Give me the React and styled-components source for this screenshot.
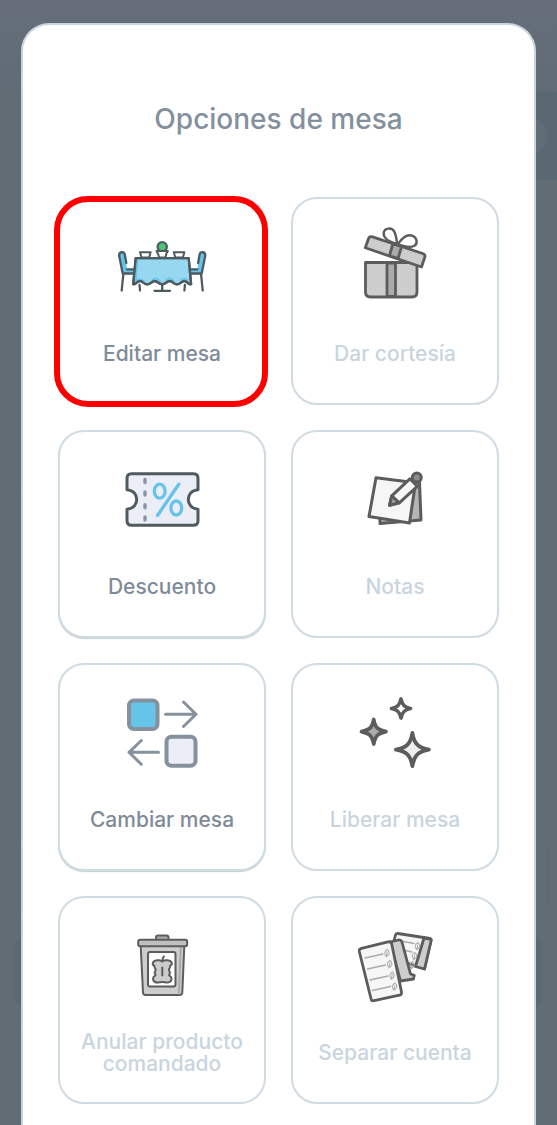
import styled, { createGlobalStyle } from 'styled-components'

const GlobalStyle = createGlobalStyle`
  * {
    box-sizing:border-box;
  }
  body{
    margin:0;
    background:#626c75;
    font-family:Inter, 'Liberation Sans', sans-serif;
  }
`

const Screen = styled.div`
  position:relative;
  min-height:100vh;
  padding:23px 21px 0;
  display:flex;
  overflow:hidden;
`

/* dimmed page under the modal */
const Backdrop = styled.div`
  position:absolute;
  inset:0;
  display:flex;
  flex-direction:column;
  background:#626c75;
`
const BackdropHeader = styled.div`
  height:92px;
  background:linear-gradient(#666f79, #616b75);
`
const BackdropBar = styled.div`
  height:88px;
  padding:0 9px;
  display:flex;
  align-items:center;
  justify-content:flex-end;
  background:linear-gradient(90deg, #626c75 50%, #5a6873 50%);

  span{
    width:36px;
    height:36px;
    border-radius:50%;
    background:#626c75;
  }
`
const BackdropSection = styled.div`
  height:${({ height }) => height};
  border-bottom:1px solid #5f6973;
`
const BackdropCard = styled.div`
  height:${({ height }) => height};
  margin:0 ${({ inset }) => inset};
  border:1px solid #5f6973;
  border-radius:12px;
  background:${({ bg }) => bg || 'transparent'};
`
const BackdropList = styled.div`
  display:flex;
  flex-direction:column;
  gap:20px;
  height:539px;
  padding-top:350px;
  border-bottom:1px solid #5f6973;
`

const Modal = styled.section`
  position:relative;
  flex:1;
  padding:78px 35px 20px;
  background:#fff;
  border:2px solid #c9d5de;
  border-bottom:0;
  border-radius:28px 28px 0 0;
`
const Title = styled.h1`
  margin:0 0 62px;
  font-size:28px;
  line-height:32px;
  font-weight:500;
  text-align:center;
  color:#84909d;
`
const Grid = styled.div`
  display:grid;
  grid-template-columns:1fr 1fr;
  gap:25px;
`
const Option = styled.button`
  position:relative;
  display:flex;
  flex-direction:column;
  align-items:center;
  gap:17px;
  min-width:0;
  aspect-ratio:1;
  padding:20px 8px;
  border:2px solid #d1dbe2;
  border-radius:26px;
  background:#fff;
  box-shadow:${({ $selected }) => $selected ? 'none' : '0 1px 1px #c3ced6'};
  color:#7f8b99;
  font:inherit;
  cursor:pointer;

  &:disabled{
    color:#c9d5de;
    box-shadow:none;
    cursor:default;
  }
  svg{
    flex:none;
    width:96px;
    height:96px;
  }
`
const Label = styled.span`
  display:flex;
  align-items:center;
  justify-content:center;
  height:44px;
  font-size:21px;
  line-height:22px;
  font-weight:500;
`
const Highlight = styled.span`
  position:absolute;
  inset:-3px -4px -4px -6px;
  border:6px solid #ff0000;
  border-radius:34px;
  pointer-events:none;
`

const Icon = ({ stroke = '#5c5c5c', width = 2.8, children }) => (
  <svg
    viewBox="0 0 96 96"
    fill="none"
    stroke={stroke}
    strokeWidth={width}
    strokeLinecap="round"
    strokeLinejoin="round"
    aria-hidden="true"
  >
    {children}
  </svg>
)

const Chair = () => (
  <g>
    <path d="M5.2 37c-.3-4.500 5-5 5.600-1.500L13 50.300h8.500v5H9.300z" fill="#66c4e8" stroke="none" />
    <path d="M12.300 44l-1.500-8.500c-.9-3.500-6-3-5.600 1.500l3.500 17.500h12M13 50.300h7M9.300 55.500L7.700 71.500M25.500 66l.5 5.500" />
  </g>
)

const TableIcon = () => (
  <Icon stroke="#4d5b60" width={2.3}>
    <Chair />
    <g transform="translate(96.400 0) scale(-1 1)"><Chair /></g>
    <path d="M48.200 64v7.500M40.500 71.800h15.500" />
    <path d="M21.700 39.200h53l2.400 26c-3 .8-4-3.200-6.600-3.200-3 0-4 3.400-7.400 3.400S58.500 62 55.700 62s-4 3.200-7.500 3.200-4.700-3.200-7.500-3.200-4 3.400-7.400 3.400S28.800 62 26 62s-4 3.800-6.800 3.200z" fill="#98d7f0" />
    <path d="M23.500 41l-1.700 20.500c2-1.500 6-2 8 .5M38 61c3-2.500 6-2 8 1M52 61c3-2.500 6-2 8 1M67 61c2-1.500 5-1.500 6.500 0" stroke="#66c4e8" strokeWidth="1.600" />
    <path d="M21.700 39.200h53l2.400 26c-3 .8-4-3.200-6.600-3.200-3 0-4 3.400-7.400 3.400S58.500 62 55.700 62s-4 3.200-7.500 3.200-4.700-3.200-7.500-3.200-4 3.400-7.400 3.400S28.800 62 26 62s-4 3.800-6.800 3.200z" />
    <circle cx="48.200" cy="27.700" r="4.600" fill="#4cc47b" />
    <path d="M42.500 32h11.400l-1.700 3-.8 3.500h-6.400l-.8-3.500zM26 33.300h10.600l-1.500 5.200h-7.600zM59.800 33.300h10.600l-1.500 5.200h-7.600z" fill="#fff" strokeWidth="2" />
  </Icon>
)

const GiftIcon = () => (
  <Icon>
    <path d="M50 25c-7-2-14-6-13.300-11.200.8-5 8-5.800 10.600-1.200 2 3.800 2.400 8 2.700 12.400zM51 25c3.500-5 8.500-9.800 13.500-8.500 6 1.600 6.500 8.500 2.500 10.500-4 1.800-10 .5-16-2z" fill="#fff" strokeWidth="2.400" />
    <path d="M18.500 43.500H70V73q0 5-5 5H23.500q-5 0-5-5z" fill="#cdcdcd" />
    <path d="M40 44h8.500v33.500H40z" fill="#aaa" />
    <path d="M25.500 17.800q-3-1-4 2l-3.200 9L74.500 48l3.200-9.500q1-3-2-4z" fill="#cdcdcd" />
    <path d="M45.800 24.800l8.700 3L51 39.600l-8.500-2.900z" fill="#aaa" />
  </Icon>
)

const TicketIcon = () => (
  <Icon stroke="#4f5b5e" width={3}>
    <path d="M17.500 21.800h62q4.500 0 4.500 4.500v11.500c-13 1-13 18.400 0 19.400v11.500q0 4.500-4.500 4.500h-62q-4.500 0-4.500-4.500V57.200c13-1 13-18.400 0-19.400V26.300q0-4.500 4.500-4.500z" fill="#ebeef6" />
    <path d="M31 27.500v3M31 40v3M31 52.700v3M31 65v3" stroke="#8a95a3" strokeWidth="3.400" />
    <g stroke="#66c4e8" strokeWidth="3.300">
      <ellipse cx="45.700" cy="39.200" rx="5.400" ry="7" />
      <ellipse cx="62.300" cy="56" rx="5.400" ry="7" />
      <path d="M64.800 32.200L43.500 63.500" />
    </g>
  </Icon>
)

const NotesIcon = () => (
  <Icon width={3}>
    <path d="M33 67v4.500l41-3.500-1.500-38-30-1z" fill="#b5b5b5" />
    <path d="M29 25.800l39.500 5L62.500 71 22 64.500z" fill="#f6f6f6" />
    <path d="M42.500 53.300l2.300-9.500 18-17 7.500 7.500-18 16.500z" fill="#f6f6f6" />
    <path d="M42.500 53.300l2.300-9.500 7.500 7z" fill="#a5a5a5" />
    <circle cx="69.800" cy="25.600" r="4.500" fill="#8c8c8c" />
  </Icon>
)

const SwapIcon = () => (
  <Icon stroke="#86919e" width={3}>
    <rect x="15" y="15.500" width="28.500" height="28.500" rx="5" fill="#66c4e8" strokeWidth="4" />
    <rect x="52.500" y="51.700" width="29" height="29" rx="5" fill="#ebeef6" strokeWidth="4" />
    <path d="M51.500 29.300H82M69.500 17L82 29.300 69.500 41.500M44.500 67.300H15M27.300 55.500L15 67.300l12.300 12" />
  </Icon>
)

const SparklesIcon = () => (
  <Icon width={3.800}>
    <path d="M54 14c1 6 3.500 8.500 9.500 9.500-6 1-8.500 3.500-9.500 9.500-1-6-3.500-8.500-9.500-9.500 6-1 8.500-3.500 9.500-9.500z" fill="#fff" />
    <path d="M26.700 34.500c1.500 8 4 10.500 12.200 12.200-8.200 1.700-10.700 4.300-12.200 12.300-1.500-8-4-10.600-12.200-12.300 8.200-1.700 10.700-4.200 12.200-12.200z" fill="#aaa" />
    <path d="M65.400 48c1.600 10.500 6 15 16.500 16.600-10.500 1.600-14.900 6-16.500 16.600C63.800 70.600 59.400 66.200 48.900 64.600 59.400 63 63.800 58.500 65.400 48z" fill="#eee" />
  </Icon>
)

const TrashIcon = () => (
  <Icon width={2}>
    <path d="M42 22v-2.500q0-2 2-2h8.500q2 0 2 2V22z" fill="#aaa" />
    <path d="M26.700 28h43.600l-2 46.500q-.2 2.500-2.500 2.500H31.500q-2.300 0-2.500-2.500z" fill="#cdcdcd" />
    <path d="M66.700 29l-1.800 46.500" stroke="#aaa" />
    <rect x="24.200" y="21.700" width="49" height="6.500" rx="2" fill="#c0c0c0" />
    <rect x="34" y="34" width="27.500" height="34.500" rx="2" fill="#fff" />
    <path d="M48.300 43.500c-2.500-2-8-1.500-9.300 1-.8 1.800 0 3 1.500 3.200-1 1.500 1.200 2.300 1.200 4s-1.400 2-1 3.500c.3 1 1 1.200.8 2.200-3 1.600-3.500 5-.5 6.600 2.400 1.300 4.800 0 7.300 0s5 1.300 7.300 0c3-1.600 2.500-5-.5-6.600-.2-1 .7-1.200.8-2.200.3-1.500-1-2-1-3.500s2-2.500 1.200-4c1.500-.2 2.200-1.500 1.500-3.200-1.300-2.500-6.800-3-9.300-1z" fill="#cdcdcd" />
    <path d="M48.300 43.300c0-2 .4-3.500 1.500-5M48.300 49.500v8" />
  </Icon>
)

const Leaf = ({ x, y }) => (
  <path
    transform={`translate(${x} ${y}) rotate(10)`}
    d="M0-3.500c-3 2-3 5 0 7 3-2 3-5 0-7zM0-1v5"
    stroke="#aaa"
    strokeWidth="1"
  />
)

const SplitIcon = () => (
  <Icon width={2.800}>
    <path d="M51 15.500l32 5q1.500.5 1 2L77.500 51 60 45 45 30l3.500-13q.7-2 2.500-1.500z" fill="#f6f6f6" />
    <path d="M77 20l6 1q1.500.5 1 2L77.500 51l-9-2.500z" fill="#cdcdcd" />
    <path d="M54 23l13 2.500M56 32l9 2" stroke="#aaa" strokeWidth="1.300" />
    <Leaf x="70.500" y="28" />
    <Leaf x="67.500" y="38" />
    <Leaf x="65" y="47" />
    <path d="M43 24l8.500-2q2.500-.3 3.500 2L63.500 56l3.700 1.300-.7 3.700-13 2z" fill="#cdcdcd" />
    <path d="M14.500 30.300l26.500-6.500q3-.5 3.700 2.200L54.500 74q.5 2.500-2 3.200l-25.500 5.500q-2.500.5-3-2L12.300 33.500q-.5-2.500 2.200-3.200z" fill="#f6f6f6" />
    <path d="M18 40l18-4M20.500 51l18-4M23 62l18-4M25.500 72.500l18-4" stroke="#aaa" strokeWidth="1.300" />
    <Leaf x="40" y="35" />
    <Leaf x="42.700" y="46" />
    <Leaf x="45" y="57.500" />
    <Leaf x="47.500" y="68.500" />
  </Icon>
)

const options = [
  { label: 'Editar mesa', icon: TableIcon, enabled: true, selected: true },
  { label: 'Dar cortesía', icon: GiftIcon },
  { label: 'Descuento', icon: TicketIcon, enabled: true },
  { label: 'Notas', icon: NotesIcon },
  { label: 'Cambiar mesa', icon: SwapIcon, enabled: true },
  { label: 'Liberar mesa', icon: SparklesIcon },
  { label: 'Anular producto comandado', icon: TrashIcon },
  { label: 'Separar cuenta', icon: SplitIcon },
]

const App = () => {
  return (
    <Screen>
      <GlobalStyle />
      <Backdrop aria-hidden="true">
        <BackdropHeader />
        <BackdropBar><span /></BackdropBar>
        <BackdropSection height="310px" />
        <BackdropList>
          <BackdropCard height="75px" inset="9px" />
          <BackdropCard height="75px" inset="15px" bg="#5a6873" />
        </BackdropList>
      </Backdrop>
      <Modal role="dialog" aria-labelledby="modal-title">
        <Title id="modal-title">Opciones de mesa</Title>
        <Grid>
          {options.map(({ label, icon: OptionIcon, enabled, selected }) =>
            <Option key={label} type="button" disabled={!enabled} $selected={selected}>
              <OptionIcon />
              <Label>{label}</Label>
              {selected && <Highlight />}
            </Option>
          )}
        </Grid>
      </Modal>
    </Screen>
  );
}

export default App
